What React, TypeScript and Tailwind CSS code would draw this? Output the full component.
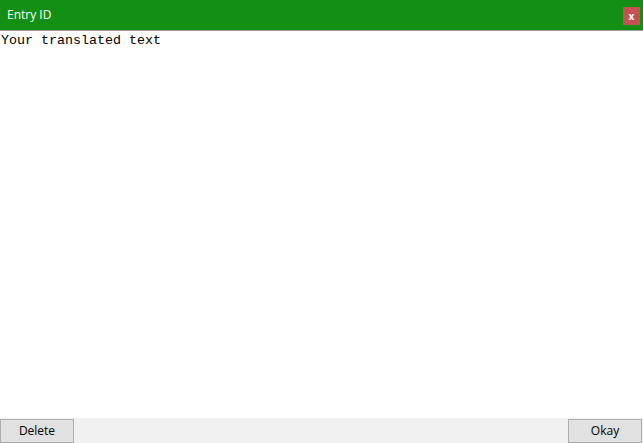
export default function App() {
  return (
    <div className="flex h-[443px] w-[643px] flex-col overflow-hidden bg-white font-['Open_Sans',sans-serif]">
      <header className="flex h-[30px] shrink-0 items-center justify-between bg-[#138f13] pl-[7px] pr-[3px]">
        <span className="text-[12px] text-white">Entry ID</span>
        <button className="mt-[2px] flex h-[18px] w-[17px] items-center justify-center bg-[#c75050] text-[10px] font-bold leading-none text-white">
          x
        </button>
      </header>
      <div className="h-px shrink-0 bg-[#a0a0a0]" />

      <textarea
        defaultValue="Your translated text"
        className="flex-1 resize-none px-[1px] pt-[2px] font-['Liberation_Mono',monospace] text-[13.33px] leading-[16px] text-black outline-none"
      />

      <footer className="flex h-[25px] shrink-0 items-end justify-between bg-[#f0f0f0] pr-[1px]">
        <button className="h-[24px] w-[74px] border border-[#adadad] bg-[#e1e1e1] text-[12px] text-black">
          Delete
        </button>
        <button className="h-[24px] w-[74px] border border-[#adadad] bg-[#e1e1e1] text-[12px] text-black">
          Okay
        </button>
      </footer>
    </div>
  );
}
